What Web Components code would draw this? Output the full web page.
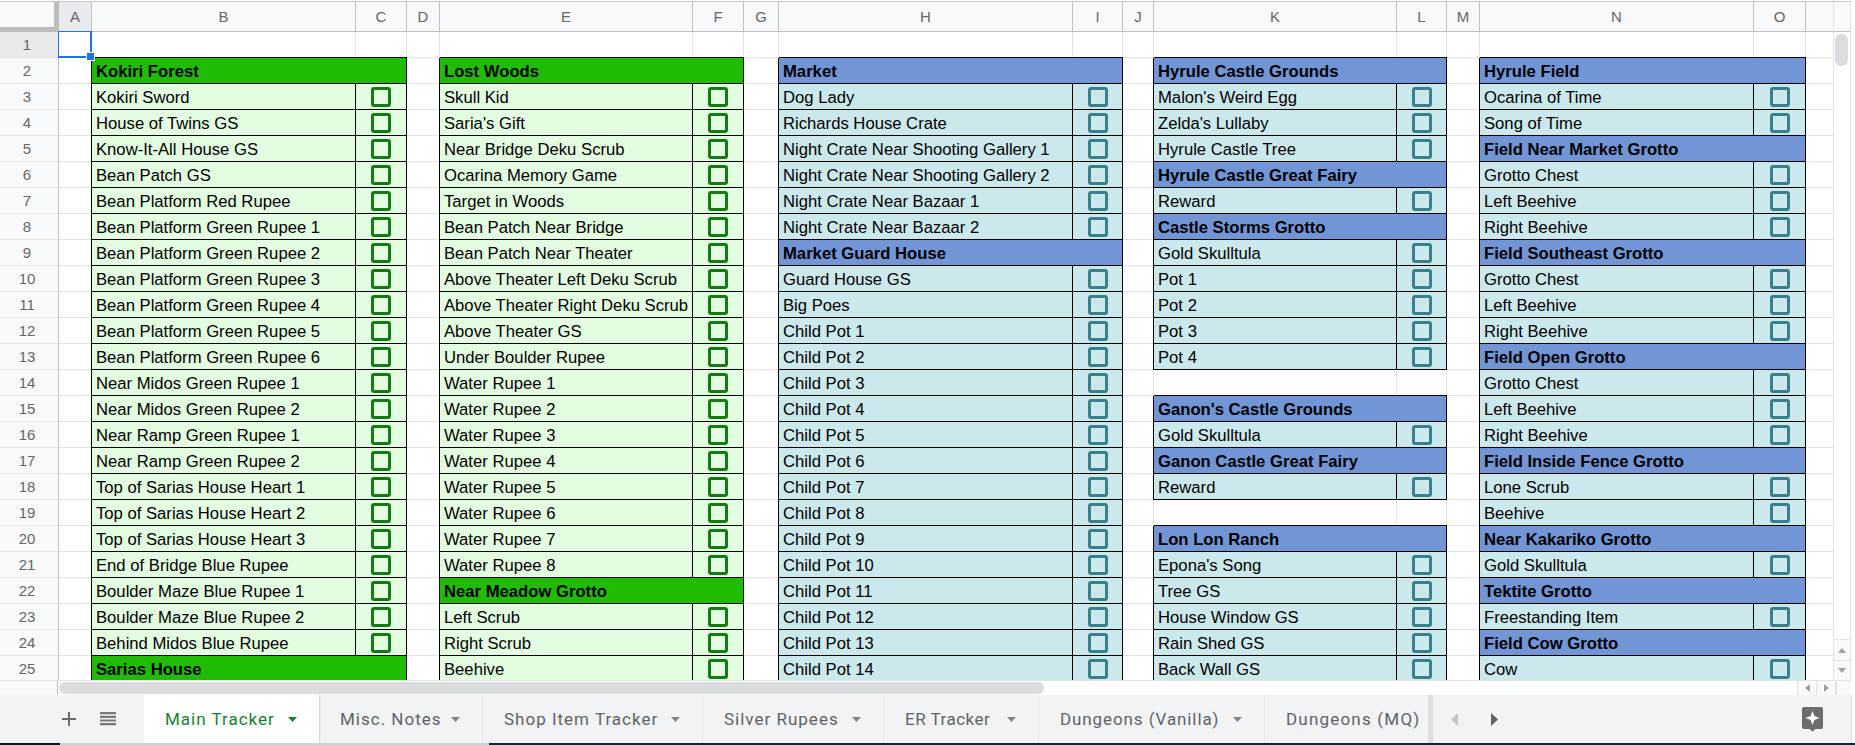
<!DOCTYPE html>
<html>
<head>
<meta charset="utf-8">
<title>Main Tracker</title>
<style>
  html, body { margin: 0; height: 745px; overflow: hidden; background: #fff; }
</style>
</head>
<body>
<sheet-app>
  <sheet-tab active style="width:175px">Main Tracker</sheet-tab>
  <sheet-tab style="width:164px">Misc. Notes</sheet-tab>
  <sheet-tab style="width:220px">Shop Item Tracker</sheet-tab>
  <sheet-tab style="width:181px">Silver Rupees</sheet-tab>
  <sheet-tab style="width:155px;letter-spacing:.5px">ER Tracker</sheet-tab>
  <sheet-tab style="width:226px;letter-spacing:.9px">Dungeons (Vanilla)</sheet-tab>
  <sheet-tab style="width:200px;letter-spacing:1.2px">Dungeons (MQ)</sheet-tab>
</sheet-app>

<script>
// sheet data, first row of each list is row 2, '#' marks a section header, '' is an empty row
const pots = [];
for (let i = 1; i <= 14; i++) pots.push('Child Pot ' + i);

const BLOCKS = [
  { col: 3, theme: 'green', items: ['#Kokiri Forest', 'Kokiri Sword', 'House of Twins GS', 'Know-It-All House GS', 'Bean Patch GS',
    'Bean Platform Red Rupee', 'Bean Platform Green Rupee 1', 'Bean Platform Green Rupee 2', 'Bean Platform Green Rupee 3',
    'Bean Platform Green Rupee 4', 'Bean Platform Green Rupee 5', 'Bean Platform Green Rupee 6', 'Near Midos Green Rupee 1',
    'Near Midos Green Rupee 2', 'Near Ramp Green Rupee 1', 'Near Ramp Green Rupee 2', 'Top of Sarias House Heart 1',
    'Top of Sarias House Heart 2', 'Top of Sarias House Heart 3', 'End of Bridge Blue Rupee', 'Boulder Maze Blue Rupee 1',
    'Boulder Maze Blue Rupee 2', 'Behind Midos Blue Rupee', '#Sarias House'] },
  { col: 6, theme: 'green', items: ['#Lost Woods', 'Skull Kid', "Saria's Gift", 'Near Bridge Deku Scrub', 'Ocarina Memory Game',
    'Target in Woods', 'Bean Patch Near Bridge', 'Bean Patch Near Theater', 'Above Theater Left Deku Scrub',
    'Above Theater Right Deku Scrub', 'Above Theater GS', 'Under Boulder Rupee', 'Water Rupee 1', 'Water Rupee 2', 'Water Rupee 3',
    'Water Rupee 4', 'Water Rupee 5', 'Water Rupee 6', 'Water Rupee 7', 'Water Rupee 8', '#Near Meadow Grotto', 'Left Scrub',
    'Right Scrub', 'Beehive'] },
  { col: 9, theme: 'blue', items: ['#Market', 'Dog Lady', 'Richards House Crate', 'Night Crate Near Shooting Gallery 1',
    'Night Crate Near Shooting Gallery 2', 'Night Crate Near Bazaar 1', 'Night Crate Near Bazaar 2', '#Market Guard House',
    'Guard House GS', 'Big Poes', ...pots] },
  { col: 12, theme: 'blue', items: ['#Hyrule Castle Grounds', "Malon's Weird Egg", "Zelda's Lullaby", 'Hyrule Castle Tree',
    '#Hyrule Castle Great Fairy', 'Reward', '#Castle Storms Grotto', 'Gold Skulltula', 'Pot 1', 'Pot 2', 'Pot 3', 'Pot 4', '',
    "#Ganon's Castle Grounds", 'Gold Skulltula', '#Ganon Castle Great Fairy', 'Reward', '', '#Lon Lon Ranch', "Epona's Song",
    'Tree GS', 'House Window GS', 'Rain Shed GS', 'Back Wall GS'] },
  { col: 15, theme: 'blue', items: ['#Hyrule Field', 'Ocarina of Time', 'Song of Time', '#Field Near Market Grotto', 'Grotto Chest',
    'Left Beehive', 'Right Beehive', '#Field Southeast Grotto', 'Grotto Chest', 'Left Beehive', 'Right Beehive', '#Field Open Grotto',
    'Grotto Chest', 'Left Beehive', 'Right Beehive', '#Field Inside Fence Grotto', 'Lone Scrub', 'Beehive', '#Near Kakariko Grotto',
    'Gold Skulltula', '#Tektite Grotto', 'Freestanding Item', '#Field Cow Grotto', 'Cow'] }
];

const LETTERS = ['A', 'B', 'C', 'D', 'E', 'F', 'G', 'H', 'I', 'J', 'K', 'L', 'M', 'N', 'O', ''];
const COL_WIDTHS = [33, 264, 51, 33, 253, 51, 35, 294, 50, 31, 243, 50, 33, 274, 52, 29];
const ROW_COUNT = 25;

class SheetCheck extends HTMLElement {
  connectedCallback() {
    this.attachShadow({ mode: 'open' });
    this.shadowRoot.innerHTML = `
      <style>
        :host { display: block; width: 20px; height: 20px; box-sizing: border-box;
          border: 3px solid var(--check-color, #127b12); border-radius: 3px; }
      </style>
    `;
  }
}

class SheetGrid extends HTMLElement {
  connectedCallback() {
    this.attachShadow({ mode: 'open' });

    let cells = '<div class="corner"></div>';
    LETTERS.forEach((l, i) => {
      cells += `<div class="colhead ${i === 0 ? 'on' : ''}">${l}</div>`;
    });

    // lookup of what sits in every data cell
    const filled = {};
    BLOCKS.forEach(b => {
      b.items.forEach((text, i) => {
        filled[(i + 2) + ':' + b.col] = { text, theme: b.theme };
      });
    });

    for (let r = 1; r <= ROW_COUNT; r++) {
      cells += `<div class="rowhead ${r === 1 ? 'on' : ''}" style="grid-row:${r + 1};grid-column:1">${r}</div>`;
      for (let c = 2; c <= 17; c++) {
        const pos = `grid-row:${r + 1};grid-column:`;
        const item = filled[r + ':' + c];
        if (item && item.text[0] === '#') {
          cells += `<div class="cell head ${item.theme}" style="${pos}${c} / span 2">${item.text.slice(1)}</div>`;
          c++;
        } else if (item && item.text) {
          cells += `<div class="cell item ${item.theme}" style="${pos}${c}">${item.text}</div>`;
          cells += `<div class="cell box ${item.theme}" style="${pos}${c + 1}"><sheet-check></sheet-check></div>`;
          c++;
        } else {
          cells += `<div class="cell" style="${pos}${c}"></div>`;
        }
      }
    }

    this.shadowRoot.innerHTML = `
      <style>
        :host { display: block; flex: 1; min-width: 0; overflow: hidden; }
        .grid { display: grid; grid-template-columns: 59px ${COL_WIDTHS.map(w => w + 'px').join(' ')};
          grid-template-rows: 30px repeat(${ROW_COUNT}, 26px); }
        .corner { background: #f8f9fa; border-right: 5px solid #bdbdbd; border-bottom: 5px solid #bdbdbd; box-sizing: border-box; }
        .colhead, .rowhead { background: #f8f9fa; color: #666; font: 15px "Liberation Sans", Arial, sans-serif;
          display: flex; align-items: center; justify-content: center; box-sizing: border-box;
          border-right: 1px solid #c0c0c0; border-bottom: 1px solid #c0c0c0; }
        .rowhead { border-bottom-color: #e2e3e3; padding-right: 4px; }
        .colhead.on, .rowhead.on { background: #e8eaed; }
        .cell { box-sizing: border-box; border-right: 1px solid #e2e3e3; border-bottom: 1px solid #e2e3e3;
          font: 16.67px "Liberation Sans", Arial, sans-serif; color: #000; min-width: 0; white-space: nowrap;
          display: flex; align-items: center; overflow: hidden; }
        .item, .head, .box { border-right-color: #000; border-bottom-color: #000; box-shadow: -1px 0 #000, 0 -1px #000; }
        .item, .head { padding: 3px 0 0 4px; }
        .head { font-weight: bold; }
        .box { justify-content: center; }
        .green.item, .green.box { background: #e3fde0; --check-color: #127b12; }
        .green.head { background: #20bc03; }
        .blue.item, .blue.box { background: #cbe8ec; --check-color: #38818c; }
        .blue.head { background: #7295d6; }
        .select { grid-row: 2; grid-column: 2; position: relative; margin: -1px 0 0 -1px; z-index: 2;
          border: 2px solid #1a73e8; border-left-width: 1px; border-top-width: 1px; }
        .select::after { content: ""; position: absolute; right: -5px; bottom: -5px; width: 7px; height: 7px;
          background: #1a73e8; border: 1px solid #fff; }
      </style>
      <div class="grid">
        ${cells}
        <div class="select"></div>
      </div>
    `;
  }
}

class SheetVscroll extends HTMLElement {
  connectedCallback() {
    this.attachShadow({ mode: 'open' });
    this.shadowRoot.innerHTML = `
      <style>
        :host { display: flex; flex-direction: column; width: 16px; flex: none; background: #fff;
          border-left: 1px solid #e2e3e3; border-right: 1px solid #e2e3e3; }
        .gap { height: 30px; background: #f8f9fa; border-bottom: 1px solid #c0c0c0; box-sizing: border-box; }
        .track { flex: 1; padding: 2px 2px 0 1px; }
        .thumb { height: 32px; border-radius: 6px; background: #dadce0; }
        .btn { height: 20px; background: #f8f9fa; border-top: 1px solid #e2e3e3; display: flex; align-items: center; justify-content: center; }
        .btn:last-child { height: 19px; }
        svg { display: block; }
      </style>
      <div class="gap"></div>
      <div class="track"><div class="thumb"></div></div>
      <div class="btn"><svg width="8" height="5"><path d="M0 5L4 0L8 5Z" fill="#a0a0a0"/></svg></div>
      <div class="btn"><svg width="8" height="5"><path d="M0 0L4 5L8 0Z" fill="#a0a0a0"/></svg></div>
    `;
  }
}

class SheetHscroll extends HTMLElement {
  connectedCallback() {
    this.attachShadow({ mode: 'open' });
    this.shadowRoot.innerHTML = `
      <style>
        :host { display: flex; height: 15px; flex: none; border-top: 1px solid #e2e3e3; box-sizing: border-box; background: #fff; }
        .corner { width: 58px; flex: none; background: #f8f9fa; border-right: 1px solid #c0c0c0; box-sizing: border-box; }
        .track { flex: 1; padding: 1px 0 1px 1px; }
        .thumb { width: 985px; height: 12px; border-radius: 6px; background: #dadce0; }
        .btn { width: 19px; flex: none; background: #f8f9fa; border-left: 1px solid #e2e3e3; display: flex; align-items: center; justify-content: center; box-sizing: border-box; }
        .end { width: 16px; flex: none; background: #f8f9fa; border-left: 2px solid #e2e3e3; box-sizing: border-box; }
      </style>
      <div class="corner"></div>
      <div class="track"><div class="thumb"></div></div>
      <div class="btn"><svg width="5" height="8"><path d="M5 0L0 4L5 8Z" fill="#a0a0a0"/></svg></div>
      <div class="btn"><svg width="5" height="8"><path d="M0 0L5 4L0 8Z" fill="#a0a0a0"/></svg></div>
      <div class="end"></div>
    `;
  }
}

class SheetTab extends HTMLElement {
  connectedCallback() {
    this.attachShadow({ mode: 'open' });
    this.shadowRoot.innerHTML = `
      <style>
        :host { display: flex; align-items: center; flex: none; height: 48px; box-sizing: border-box; padding: 0 22px 0 21px;
          color: #5f6368; font: 400 17px Roboto, "Noto Sans", sans-serif; letter-spacing: 1px; white-space: nowrap;
          border-right: 1px solid #e6e8ea; --caret: #80868b; }
        :host([active]) { background: #fff; color: #188038; --caret: #188038; border-right: 0; box-shadow: 1px 0 1px rgba(60,64,67,.15), -1px 0 1px rgba(60,64,67,.15); position: relative; }
        svg { display: block; flex: none; margin-left: auto; }
      </style>
      <slot></slot>
      <svg width="9" height="5"><path d="M0 0H9L4.5 5Z" fill="var(--caret)"/></svg>
    `;
  }
}

class SheetApp extends HTMLElement {
  connectedCallback() {
    this.attachShadow({ mode: 'open' });
    this.shadowRoot.innerHTML = `
      <style>
        :host { display: flex; flex-direction: column; width: 1855px; height: 745px; overflow: hidden; background: #fff; }
        .topline { height: 1px; flex: none; margin-top: 1px; background: #c8c8c8; margin-right: 4px; }
        .main { display: flex; flex: none; height: 678px; width: 1851px; }
        sheet-hscroll { width: 1851px; }
        .tabbar { display: flex; flex: none; height: 48px; width: 1851px; background: #f1f3f4; border-right: 1px solid #dadce0; box-sizing: content-box; align-items: center; }
        .tools { width: 144px; flex: none; display: flex; align-items: center; padding-left: 62px; box-sizing: border-box; gap: 24px; }
        .tabs { width: 1284px; flex: none; display: flex; overflow: hidden; }
        .shade { width: 5px; height: 48px; flex: none; background: #dcdedf; }
        .nav { display: flex; gap: 33px; margin-left: 18px; align-items: center; }
        .explore { margin-left: auto; margin-right: 27px; display: block; }
        .strip { display: flex; flex: 1; min-height: 2px; }
        .strip div:nth-child(1) { width: 60px; background: #15171c; }
        .strip div:nth-child(2) { width: 429px; background: #cfd0d2; }
        .strip div:nth-child(3) { flex: 1; background: #1c2238; }
      </style>
      <div class="topline"></div>
      <div class="main">
        <sheet-grid></sheet-grid>
        <sheet-vscroll></sheet-vscroll>
      </div>
      <sheet-hscroll></sheet-hscroll>
      <div class="tabbar">
        <div class="tools">
          <svg width="14" height="14"><path d="M6 0h2v6h6v2H8v6H6V8H0V6h6z" fill="#6a6e72"/></svg>
          <svg width="16" height="14"><path d="M0 0h16v2.200H0zM0 3.700h16v2.200H0zM0 7.400h16v2.200H0zM0 11.100h16v2.200H0z" fill="#77797c"/></svg>
        </div>
        <div class="tabs"><slot></slot></div>
        <div class="shade"></div>
        <div class="nav">
          <svg width="7" height="13"><path d="M7 0L0 6.500L7 13Z" fill="#c4c6c8"/></svg>
          <svg width="7" height="13"><path d="M0 0L7 6.500L0 13Z" fill="#5f6368"/></svg>
        </div>
        <svg class="explore" width="23" height="26" viewBox="0 0 23 26">
          <path d="M3 1h17a2 2 0 0 1 2 2v18a2 2 0 0 1-2 2h-5.500l-3 2.500-3-2.500H3a2 2 0 0 1-2-2V3a2 2 0 0 1 2-2z" fill="#6b6d70"/>
          <path d="M11.500 5l1.900 5.100 5.100 1.900-5.100 1.900-1.900 5.100-1.900-5.100L4.500 12l5.100-1.900z" fill="#fff"/>
        </svg>
      </div>
      <div class="strip"><div></div><div></div><div></div></div>
    `;
  }
}

customElements.define('sheet-check', SheetCheck);
customElements.define('sheet-grid', SheetGrid);
customElements.define('sheet-vscroll', SheetVscroll);
customElements.define('sheet-hscroll', SheetHscroll);
customElements.define('sheet-tab', SheetTab);
customElements.define('sheet-app', SheetApp);
</script>
</body>
</html>
